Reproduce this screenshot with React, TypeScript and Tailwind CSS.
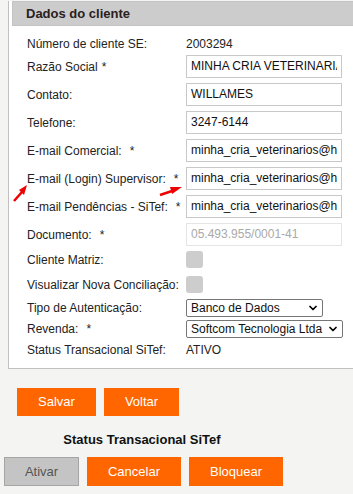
import { ChevronDown } from "lucide-react";

const font = { fontFamily: "'Liberation Sans', Arial, sans-serif" };

function TextInput({ value, disabled }: { value: string; disabled?: boolean }) {
  return (
    <div
      className={`h-[23px] w-[156px] border pl-[4px] text-[12px] leading-[21px] ${
        disabled ? "border-[#e4e4e4] text-[#a9a9a9]" : "border-[#c8c8c8] text-[#111]"
      }`}
    >
      <div className="w-[146px] overflow-hidden whitespace-nowrap">{value}</div>
    </div>
  );
}

function Select({ value, width }: { value: string; width: string }) {
  return (
    <div
      className={`flex h-[18px] items-center justify-between rounded-[2px] border border-[#767676] bg-white pl-[4px] pr-[3px] text-[12px] text-[#111] ${width}`}
    >
      <span className="whitespace-nowrap">{value}</span>
      <ChevronDown size={12} strokeWidth={3.5} className="text-black" />
    </div>
  );
}

function Row({
  label,
  req,
  wide,
  h,
  children,
}: {
  label: string;
  req?: boolean;
  wide?: boolean;
  h: string;
  children?: React.ReactNode;
}) {
  return (
    <div className={`flex items-center ${h}`}>
      <div className="w-[159px] shrink-0 whitespace-nowrap text-[12px] text-[#222]">
        {label}
        {req && <span className={wide ? "ml-[8px]" : "ml-[4px]"}>*</span>}
      </div>
      {children}
    </div>
  );
}

function Btn({ label, w, h, gray }: { label: string; w: string; h: string; gray?: boolean }) {
  return (
    <button
      className={`text-[13px] ${w} ${h} ${
        gray ? "border border-[#a5a5a5] bg-[#c4c4c4] text-[#555]" : "bg-[#ff6600] text-white"
      }`}
    >
      {label}
    </button>
  );
}

export default function App() {
  return (
    <div className="relative h-[494px] w-[353px] overflow-hidden bg-[#f4f5f3]" style={font}>
      <div className="ml-[8px] w-[360px] border-b border-l border-[#c0c0c0] bg-white pb-[8px]">
        <div className="ml-[3px] mt-[1px] flex h-[25px] items-center border border-[#c4c4c4] bg-[#cccccc] pl-[13px] text-[13px] font-bold text-[#2a2020]">
          Dados do cliente
        </div>
        <div className="pl-[18px] pt-[7px]">
          <Row label="Número de cliente SE:" h="h-[22px]">
            <span className="text-[12px] text-[#222]">2003294</span>
          </Row>
          <div className="flex flex-col gap-[5px]">
            <Row label="Razão Social" req h="h-[23px]">
              <TextInput value="MINHA CRIA VETERINARIA" />
            </Row>
            <Row label="Contato:" h="h-[23px]">
              <TextInput value="WILLAMES" />
            </Row>
            <Row label="Telefone:" h="h-[23px]">
              <TextInput value="3247-6144" />
            </Row>
            <Row label="E-mail Comercial:" req wide h="h-[23px]">
              <TextInput value="minha_cria_veterinarios@hotmail.com" />
            </Row>
            <Row label="E-mail (Login) Supervisor:" req wide h="h-[23px]">
              <TextInput value="minha_cria_veterinarios@hotmail.com" />
            </Row>
            <Row label="E-mail Pendências - SiTef:" req wide h="h-[23px]">
              <TextInput value="minha_cria_veterinarios@hotmail.com" />
            </Row>
            <Row label="Documento:" req wide h="h-[23px]">
              <TextInput value="05.493.955/0001-41" disabled />
            </Row>
          </div>
          <Row label="Cliente Matriz:" h="h-[25px] mt-[1px]">
            <div className="h-[17px] w-[17px] rounded-[3px] bg-[#cdcdcd]" />
          </Row>
          <Row label="Visualizar Nova Conciliação:" h="h-[25px]">
            <div className="h-[17px] w-[17px] rounded-[3px] bg-[#cdcdcd]" />
          </Row>
          <Row label="Tipo de Autenticação:" h="h-[21px]">
            <Select value="Banco de Dados" width="w-[137px]" />
          </Row>
          <Row label="Revenda:" req wide h="h-[22px]">
            <Select value="Softcom Tecnologia Ltda" width="w-[157px]" />
          </Row>
          <Row label="Status Transacional SiTef:" h="h-[20px]">
            <span className="text-[12px] text-[#222]">ATIVO</span>
          </Row>
        </div>
      </div>

      <div className="ml-[17px] mt-[19px] flex gap-[8px]">
        <Btn label="Salvar" w="w-[79px]" h="h-[28px]" />
        <Btn label="Voltar" w="w-[75px]" h="h-[28px]" />
      </div>

      <div className="mt-[16px] w-[284px] text-center text-[13px] font-bold leading-[15px] text-[#111]">
        Status Transacional SiTef
      </div>

      <div className="ml-[4px] mt-[10px] flex gap-[8px]">
        <Btn label="Ativar" w="w-[75px]" h="h-[29px]" gray />
        <Btn label="Cancelar" w="w-[94px]" h="h-[29px]" />
        <Btn label="Bloquear" w="w-[94px]" h="h-[29px]" />
      </div>

      <svg className="absolute left-[10px] top-[182px]" width="20" height="22" viewBox="0 0 20 22">
        <line x1="4" y1="19" x2="12" y2="10" stroke="#ee0000" strokeWidth="2.5" />
        <polygon points="17,3 9,8 14,13" fill="#ee0000" />
      </svg>
      <svg className="absolute left-[158px] top-[183px]" width="26" height="14" viewBox="0 0 26 14">
        <line x1="2" y1="12" x2="14" y2="8" stroke="#ee0000" strokeWidth="2.5" />
        <polygon points="24,4 12,4 14,11" fill="#ee0000" />
      </svg>
    </div>
  );
}
